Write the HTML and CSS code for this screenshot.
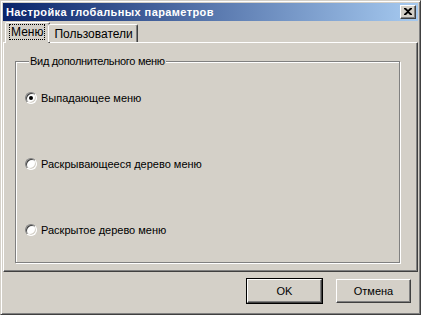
FILE: index.html
```html
<!DOCTYPE html>
<html lang="ru">
<head>
    <meta charset="UTF-8">
    <title>Настройка глобальных параметров</title>
    <link rel="stylesheet" href="styles.css">
</head>
<body>
    <div class="window">
        <div class="titlebar">
            <span class="title">Настройка глобальных параметров</span>
            <div class="close-btn">
                <svg width="8" height="7" viewBox="0 0 8 7">
                    <path d="M0 0h2l2 2 2-2h2v1l-3 2.5 3 2.5v1h-2l-2-2-2 2h-2v-1l3-2.5-3-2.5z" fill="#000"/>
                </svg>
            </div>
        </div>

        <div class="tabs">
            <div class="tab active"><span class="focus">Меню</span></div>
            <div class="tab">Пользователи</div>
        </div>

        <div class="panel">
            <fieldset class="group">
                <legend>Вид дополнительного меню</legend>
                <div class="radio-row"><span class="radio checked"></span>Выпадающее меню</div>
                <div class="radio-row"><span class="radio"></span>Раскрывающееся дерево меню</div>
                <div class="radio-row"><span class="radio"></span>Раскрытое дерево меню</div>
            </fieldset>
        </div>

        <div class="buttons">
            <div class="btn default">OK</div>
            <div class="btn">Отмена</div>
        </div>
    </div>
</body>
</html>
```

FILE: styles.css
```css
:root {
    --face: #d4d0c8;
    --shadow: #808080;
    --dark: #404040;
    --light: #ffffff;
}

* {
    margin: 0;
    padding: 0;
    box-sizing: border-box;
}

body {
    background-color: var(--face);
    font-family: 'Liberation Sans', Arial, sans-serif;
    font-size: 11px;
    color: #000;
}

.window {
    width: 421px;
    height: 315px;
    background-color: var(--face);
    border: 1px solid;
    border-color: var(--face) var(--dark) var(--dark) var(--face);
    box-shadow: inset 1px 1px var(--light), inset -1px -1px var(--shadow);
    padding: 2px;
    display: flex;
    flex-direction: column;
}

.titlebar {
    height: 18px;
    background: linear-gradient(to right, #0a246a, #a6caf0);
    display: flex;
    align-items: center;
    justify-content: space-between;
    padding: 0 2px 0 3px;
}

.title {
    color: #fff;
    font-weight: bold;
    font-size: 11px;
    letter-spacing: 0.4px;
}

.close-btn {
    width: 16px;
    height: 14px;
    background-color: var(--face);
    border: 1px solid;
    border-color: var(--light) var(--dark) var(--dark) var(--light);
    box-shadow: inset -1px -1px var(--shadow);
    display: flex;
    align-items: center;
    justify-content: center;
    padding-bottom: 1px;
}

.tabs {
    display: flex;
    align-items: flex-end;
    height: 20px;
    margin-top: 1px;
    padding-left: 2px;
    position: relative;
    z-index: 1;
}

.tab {
    height: 18px;
    padding: 2px 4px 0 5px;
    border: 1px solid;
    border-bottom: none;
    border-color: var(--light) var(--dark) transparent var(--light);
    box-shadow: inset -1px 0 var(--shadow);
    border-radius: 2px 2px 0 0;
    background-color: var(--face);
    font-size: 12px;
}

.tab.active {
    height: 21px;
    margin-bottom: -1px;
    margin-right: -2px;
    padding: 2px 5px 0 4px;
}

.focus {
    display: inline-block;
    outline: 1px dotted #000;
    padding: 0 1px;
    line-height: 14px;
}

.panel {
    flex: none;
    height: 230px;
    border: 1px solid;
    border-color: var(--light) var(--dark) var(--dark) var(--light);
    box-shadow: inset -1px -1px var(--shadow);
    padding: 12px 17px 8px 11px;
}

.group {
    height: 100%;
    border: 1px solid var(--shadow);
    box-shadow: inset 1px 1px var(--light), 1px 1px var(--light);
    padding: 23px 0 0 9px;
    display: flex;
    flex-direction: column;
    gap: 52px;
}

.group legend {
    margin-left: 4px;
    padding: 0 1px;
    background-color: var(--face);
    line-height: 13px;
    letter-spacing: -0.3px;
}

.radio-row {
    display: flex;
    align-items: center;
    gap: 4px;
    height: 14px;
}

.radio {
    position: relative;
    width: 12px;
    height: 12px;
    border-radius: 50%;
    border: 1px solid;
    border-color: var(--shadow) var(--light) var(--light) var(--shadow);
    box-shadow: inset 1px 1px var(--dark), inset -1px -1px var(--face);
    background-color: #fff;
}

.radio.checked::after {
    content: "";
    position: absolute;
    left: 3px;
    top: 3px;
    width: 4px;
    height: 4px;
    border-radius: 50%;
    background-color: #000;
}

.buttons {
    display: flex;
    justify-content: flex-end;
    gap: 14px;
    padding: 7px 7px 0 0;
}

.btn {
    width: 75px;
    height: 24px;
    display: flex;
    align-items: center;
    justify-content: center;
    border: 1px solid;
    border-color: var(--light) var(--dark) var(--dark) var(--light);
    box-shadow: inset -1px -1px var(--shadow);
    background-color: var(--face);
}

.btn.default {
    outline: 1px solid #000;
}
```
